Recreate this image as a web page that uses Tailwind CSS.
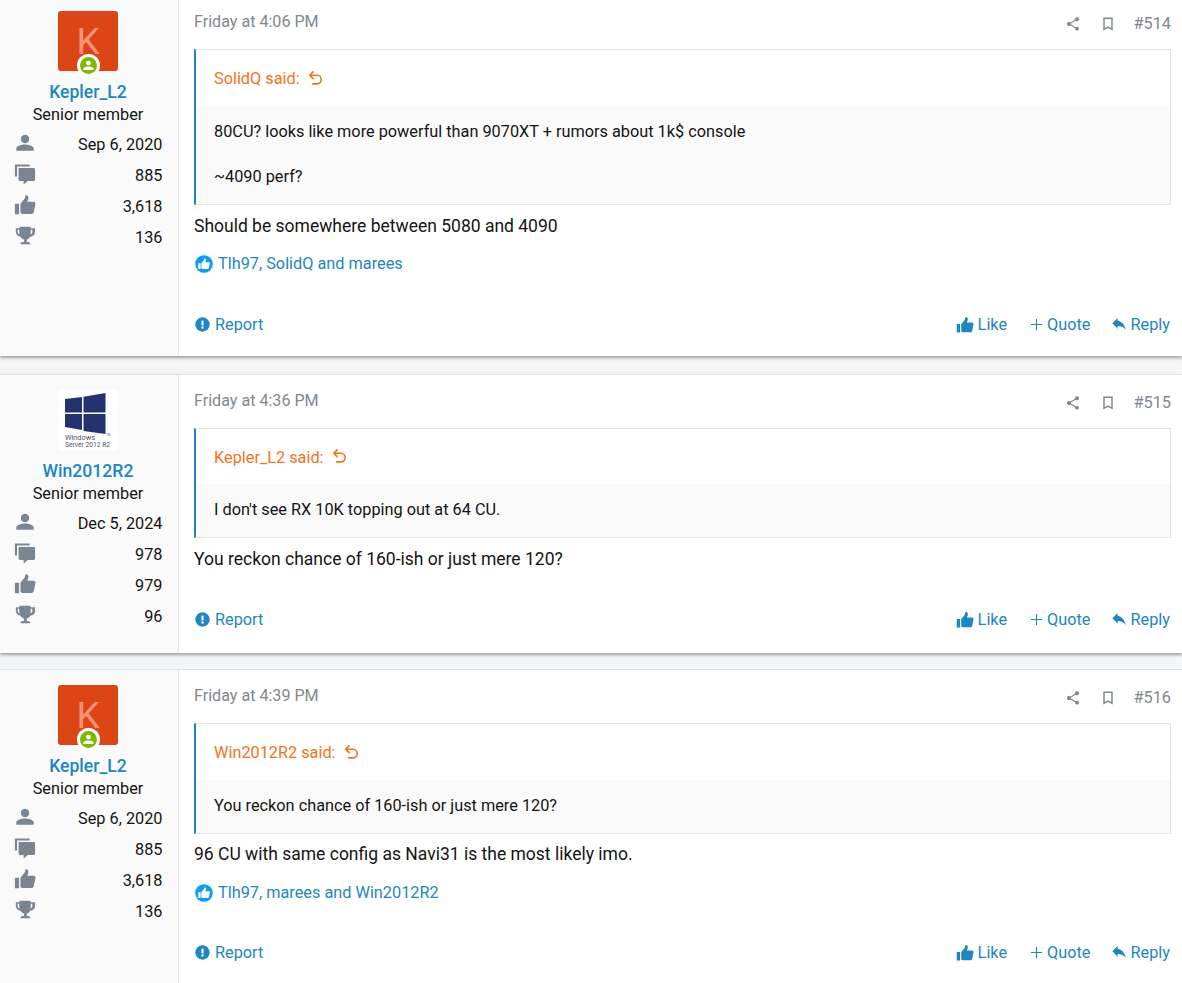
<!DOCTYPE html>
<html><head><meta charset="utf-8">
<script src="https://cdn.jsdelivr.net/npm/@tailwindcss/browser@4"></script>
</head>
<body class="bg-[#f4f5f7] overflow-hidden font-['Roboto',sans-serif] text-[16.3px] leading-[22px] text-[#141414]">
<svg class="hidden">
<defs>
<symbol id="user" viewBox="0 0 24 24"><path fill="currentColor" d="M12 3a4.600 4.600 0 1 1 0 9.200A4.600 4.600 0 0 1 12 3zM2.500 20.500v-2.400c0-3 6.300-4.400 9.500-4.400s9.500 1.400 9.500 4.400v2.400z"/></symbol>
<symbol id="msgs" viewBox="0 0 24 24"><path fill="currentColor" d="M1 1.500h16v2.300H3.300v11H1zM5 5.500H21.500a1.500 1.500 0 0 1 1.500 1.500V18a1.500 1.500 0 0 1-1.500 1.500H15L10.500 23.500V19.500H6.500A1.500 1.500 0 0 1 5 18z"/></symbol>
<symbol id="thumb" viewBox="0 0 24 24"><path fill="currentColor" d="M1 10.500h4.500V22H1zM7 10.500l4.500-5.200c.6-1.200.5-2.600 1-3.800 1.700-.5 3.300.6 3.300 2.700 0 1.700-.8 3-1.300 4.300h7c1.300 0 2.200 1.200 1.900 2.400l-1.900 9c-.3 1.100-1.100 1.800-2.300 1.800H9.500C8 21.700 7 20.800 7 19.500z"/></symbol>
<symbol id="trophy" viewBox="0 0 24 24"><path fill="currentColor" d="M6 2h12v1.500h5v4.200c0 2.800-2.200 4.800-5.300 5.100-.8 1.600-2.100 2.700-3.700 3.100v2.600h1.500c1.300 0 2.200.9 2.500 2.500H6.900c.3-1.600 1.200-2.500 2.500-2.500H11v-2.600c-1.700-.4-3-1.500-3.700-3.100C4.200 12.500 2 10.500 2 7.700V3.500h4zM4 5.300v2.400c0 1.200.7 2.100 2 2.600-.2-1-.3-2.100-.3-3.200V5.300zm16 0h-1.700v1.800c0 1.100-.1 2.200-.3 3.200 1.300-.5 2-1.400 2-2.600z"/></symbol>
<symbol id="share" viewBox="0 0 24 24"><path fill="currentColor" d="M18 16.100c-.8 0-1.500.3-2 .8l-7.100-4.200c.1-.2.100-.5.100-.7s0-.5-.1-.7l7-4.100c.5.500 1.300.800 2.100.800a3 3 0 1 0-3-3c0 .2 0 .5.100.7l-7 4.100A3 3 0 0 0 3 12a3 3 0 0 0 5.100 2.200l7.100 4.200c-.1.200-.1.400-.1.600a2.900 2.900 0 1 0 2.900-2.900z"/></symbol>
<symbol id="book" viewBox="0 0 24 24"><path fill="none" stroke="currentColor" stroke-width="2.200" d="M6 3.500h12V20l-6-3.200L6 20z"/></symbol>
<symbol id="undo" viewBox="0 0 24 24"><path fill="none" stroke="currentColor" stroke-width="2.200" stroke-linecap="round" stroke-linejoin="round" d="M9.500 2.500L5 7l4.500 4.500M5 7h9.500a5.700 5.700 0 0 1 0 11.500H9"/></symbol>
<symbol id="report" viewBox="0 0 24 24"><circle cx="12" cy="12" r="11.500" fill="currentColor"/><rect x="10.300" y="5.500" width="3.400" height="8" rx="1" fill="#fff"/><circle cx="12" cy="16.800" r="1.900" fill="#fff"/></symbol>
<symbol id="plus" viewBox="0 0 24 24"><path fill="none" stroke="currentColor" stroke-width="1.800" d="M12 3v18M3 12h18"/></symbol>
<symbol id="reply" viewBox="0 0 24 24"><path fill="currentColor" d="M10 5.500V1.500L2 9.500l8 8v-4.100c5.700 0 9.600 1.800 12 6.100-1-6-4.400-12.800-12-14z"/></symbol>
</defs>
</svg>

<main class="-mt-[4px] flex flex-col">

<!-- Post 514 -->
<article class="flex h-[360px] bg-white shadow-[0_2px_3px_rgba(0,0,0,0.35)]">
  <aside class="w-[179px] shrink-0 bg-[#fafafa] border-r border-[#e3e5e8] pt-[15px] pr-[2px] flex flex-col items-center">
    <div class="relative w-[60px] h-[60px] rounded-[3px] bg-[#dc4516] flex items-center justify-center text-[#f8917a] text-[37px] font-normal leading-none">K
      <span class="absolute left-[18.500px] top-[43px] w-[23px] h-[23px] rounded-full bg-white flex items-center justify-center"><span class="w-[17px] h-[17px] rounded-full bg-[#7fb800] text-white flex items-center justify-center"><svg class="w-[13px] h-[13px]"><use href="#user"/></svg></span></span>
    </div>
    <div class="mt-[6px] text-[#1e86c1] text-[17.600px] font-medium leading-[30px] h-[24px]">Kepler_L2</div>
    <div class="leading-[22px] mt-[3px]">Senior member</div>
    <dl class="w-full pl-[14px] pr-[13.500px] mt-[3px]">
      <div class="flex justify-between items-center h-[31.200px]"><svg class="w-[22px] h-[22px] -mt-[4px] text-[#7a8594]"><use href="#user"/></svg><span>Sep 6, 2020</span></div>
      <div class="flex justify-between items-center h-[31.200px]"><svg class="w-[22px] h-[22px] -mt-[4px] text-[#7a8594]"><use href="#msgs"/></svg><span>885</span></div>
      <div class="flex justify-between items-center h-[31.200px]"><svg class="w-[22px] h-[22px] -mt-[4px] text-[#7a8594]"><use href="#thumb"/></svg><span>3,618</span></div>
      <div class="flex justify-between items-center h-[31.200px]"><svg class="w-[22px] h-[22px] -mt-[4px] text-[#7a8594]"><use href="#trophy"/></svg><span>136</span></div>
    </dl>
  </aside>
  <section class="flex-1 min-w-0 pl-[15px] pr-[11px] flex flex-col">
    <header class="h-[53px] pt-[15px] flex items-start text-[#7f8791]">
      <span class="text-[16.100px]">Friday at 4:06 PM</span>
      <span class="ml-auto flex items-center gap-[19px] mt-[2px]"><svg class="w-[16px] h-[16px]"><use href="#share"/></svg><svg class="w-[16px] h-[16px]"><use href="#book"/></svg><span class="ml-[-1px]">#514</span></span>
    </header>
    <blockquote class="border border-[#e1e3e6] border-l-[2px] border-l-[#1e86c1]">
      <div class="h-[56px] pt-[2px] pl-[18px] flex items-center text-[#f4731c]">SolidQ said:<svg class="w-[18px] h-[18px] ml-[6px] -mt-[1px]"><use href="#undo"/></svg></div>
      <div class="bg-[#fafafa] pl-[18px] pt-[15px] pb-[15px] leading-[22.500px]">80CU? looks like more powerful than 9070XT + rumors about 1k$ console<br><br>~4090 perf?</div>
    </blockquote>
    <div class="mt-[10px] text-[17.500px]">Should be somewhere between 5080 and 4090</div>
    <div class="mt-[16px] flex items-center text-[#1e86c1]"><svg class="w-[20px] h-[20px] mr-[4px]" viewBox="0 0 24 24"><circle cx="12" cy="12" r="12" fill="#e9f5fd"/><circle cx="12" cy="12" r="10.500" fill="#0f9df0"/><g transform="translate(4.500 4.500) scale(.62)"><use href="#thumb" width="24" height="24" class="text-white"/></g></svg>Tlh97, SolidQ and marees</div>
    <footer class="mt-[39px] flex items-center text-[#1e86c1] pr-[1px]">
      <span class="flex items-center ml-[1px]"><svg class="w-[15px] h-[15px] mr-[5px]"><use href="#report"/></svg>Report</span>
      <span class="ml-auto flex items-center"><svg class="w-[18px] h-[18px] mr-[4px]"><use href="#thumb"/></svg>Like</span>
      <span class="ml-[22px] flex items-center"><svg class="w-[15px] h-[15px] mr-[3px]"><use href="#plus"/></svg>Quote</span>
      <span class="ml-[20px] flex items-center"><svg class="w-[16px] h-[16px] mr-[4px]"><use href="#reply"/></svg>Reply</span>
    </footer>
  </section>
</article>

<!-- Post 515 -->
<article class="mt-[18px] flex h-[279px] bg-white border-t border-[#dfe1e4] shadow-[0_2px_3px_rgba(0,0,0,0.35)]">
  <aside class="w-[179px] shrink-0 bg-[#fafafa] border-r border-[#e3e5e8] pt-[15px] pr-[2px] flex flex-col items-center">
    <svg class="w-[60px] h-[60px] shrink-0 rounded-[3px] bg-white" viewBox="0 0 60 60">
      <path fill="#24336f" d="M7 9L24 7V22.500H7ZM25.500 6.800L47.500 3V22.500H25.500ZM7 24H24V40L7 37ZM25.500 24H47.500V44L25.500 41Z"/>
      <text x="7" y="50" font-family="Roboto" font-size="8" fill="#4d5364" textLength="30" lengthAdjust="spacingAndGlyphs">Windows</text>
      <text x="7" y="57" font-family="Roboto" font-size="7.500" fill="#4d5364" textLength="45" lengthAdjust="spacingAndGlyphs">Server 2012 R2</text>
      <text x="48" y="46" font-family="Roboto" font-size="3" fill="#4d5364">TM</text>
    </svg>
    <div class="mt-[6px] text-[#1e86c1] text-[17.600px] font-medium leading-[30px] h-[24px]">Win2012R2</div>
    <div class="leading-[22px] mt-[3px]">Senior member</div>
    <dl class="w-full pl-[14px] pr-[13.500px] mt-[3px]">
      <div class="flex justify-between items-center h-[31.200px]"><svg class="w-[22px] h-[22px] -mt-[4px] text-[#7a8594]"><use href="#user"/></svg><span>Dec 5, 2024</span></div>
      <div class="flex justify-between items-center h-[31.200px]"><svg class="w-[22px] h-[22px] -mt-[4px] text-[#7a8594]"><use href="#msgs"/></svg><span>978</span></div>
      <div class="flex justify-between items-center h-[31.200px]"><svg class="w-[22px] h-[22px] -mt-[4px] text-[#7a8594]"><use href="#thumb"/></svg><span>979</span></div>
      <div class="flex justify-between items-center h-[31.200px]"><svg class="w-[22px] h-[22px] -mt-[4px] text-[#7a8594]"><use href="#trophy"/></svg><span>96</span></div>
    </dl>
  </aside>
  <section class="flex-1 min-w-0 pl-[15px] pr-[11px] flex flex-col">
    <header class="h-[53px] pt-[15px] flex items-start text-[#7f8791]">
      <span class="text-[16.100px]">Friday at 4:36 PM</span>
      <span class="ml-auto flex items-center gap-[19px] mt-[2px]"><svg class="w-[16px] h-[16px]"><use href="#share"/></svg><svg class="w-[16px] h-[16px]"><use href="#book"/></svg><span class="ml-[-1px]">#515</span></span>
    </header>
    <blockquote class="border border-[#e1e3e6] border-l-[2px] border-l-[#1e86c1]">
      <div class="h-[55px] pt-[2px] pl-[18px] flex items-center text-[#f4731c]">Kepler_L2 said:<svg class="w-[18px] h-[18px] ml-[6px] -mt-[1px]"><use href="#undo"/></svg></div>
      <div class="bg-[#fafafa] pl-[18px] pt-[15px] pb-[15px] leading-[22.500px]">I don't see RX 10K topping out at 64 CU.</div>
    </blockquote>
    <div class="mt-[10px] text-[17.500px]">You reckon chance of 160-ish or just mere 120?</div>
    <footer class="mt-[39px] flex items-center text-[#1e86c1] pr-[1px]">
      <span class="flex items-center ml-[1px]"><svg class="w-[15px] h-[15px] mr-[5px]"><use href="#report"/></svg>Report</span>
      <span class="ml-auto flex items-center"><svg class="w-[18px] h-[18px] mr-[4px]"><use href="#thumb"/></svg>Like</span>
      <span class="ml-[22px] flex items-center"><svg class="w-[15px] h-[15px] mr-[3px]"><use href="#plus"/></svg>Quote</span>
      <span class="ml-[20px] flex items-center"><svg class="w-[16px] h-[16px] mr-[4px]"><use href="#reply"/></svg>Reply</span>
    </footer>
  </section>
</article>

<!-- Post 516 -->
<article class="mt-[16px] flex h-[330px] bg-white border-t border-[#dfe1e4]">
  <aside class="w-[179px] shrink-0 bg-[#fafafa] border-r border-[#e3e5e8] pt-[15px] pr-[2px] flex flex-col items-center">
    <div class="relative w-[60px] h-[60px] rounded-[3px] bg-[#dc4516] flex items-center justify-center text-[#f8917a] text-[37px] font-normal leading-none">K
      <span class="absolute left-[18.500px] top-[43px] w-[23px] h-[23px] rounded-full bg-white flex items-center justify-center"><span class="w-[17px] h-[17px] rounded-full bg-[#7fb800] text-white flex items-center justify-center"><svg class="w-[13px] h-[13px]"><use href="#user"/></svg></span></span>
    </div>
    <div class="mt-[6px] text-[#1e86c1] text-[17.600px] font-medium leading-[30px] h-[24px]">Kepler_L2</div>
    <div class="leading-[22px] mt-[3px]">Senior member</div>
    <dl class="w-full pl-[14px] pr-[13.500px] mt-[3px]">
      <div class="flex justify-between items-center h-[31.200px]"><svg class="w-[22px] h-[22px] -mt-[4px] text-[#7a8594]"><use href="#user"/></svg><span>Sep 6, 2020</span></div>
      <div class="flex justify-between items-center h-[31.200px]"><svg class="w-[22px] h-[22px] -mt-[4px] text-[#7a8594]"><use href="#msgs"/></svg><span>885</span></div>
      <div class="flex justify-between items-center h-[31.200px]"><svg class="w-[22px] h-[22px] -mt-[4px] text-[#7a8594]"><use href="#thumb"/></svg><span>3,618</span></div>
      <div class="flex justify-between items-center h-[31.200px]"><svg class="w-[22px] h-[22px] -mt-[4px] text-[#7a8594]"><use href="#trophy"/></svg><span>136</span></div>
    </dl>
  </aside>
  <section class="flex-1 min-w-0 pl-[15px] pr-[11px] flex flex-col">
    <header class="h-[53px] pt-[15px] flex items-start text-[#7f8791]">
      <span class="text-[16.100px]">Friday at 4:39 PM</span>
      <span class="ml-auto flex items-center gap-[19px] mt-[2px]"><svg class="w-[16px] h-[16px]"><use href="#share"/></svg><svg class="w-[16px] h-[16px]"><use href="#book"/></svg><span class="ml-[-1px]">#516</span></span>
    </header>
    <blockquote class="border border-[#e1e3e6] border-l-[2px] border-l-[#1e86c1]">
      <div class="h-[56px] pt-[2px] pl-[18px] flex items-center text-[#f4731c]">Win2012R2 said:<svg class="w-[18px] h-[18px] ml-[6px] -mt-[1px]"><use href="#undo"/></svg></div>
      <div class="bg-[#fafafa] pl-[18px] pt-[15px] pb-[15px] leading-[22.500px]">You reckon chance of 160-ish or just mere 120?</div>
    </blockquote>
    <div class="mt-[9px] text-[17.500px]">96 CU with same config as Navi31 is the most likely imo.</div>
    <div class="mt-[17px] flex items-center text-[#1e86c1]"><svg class="w-[20px] h-[20px] mr-[4px]" viewBox="0 0 24 24"><circle cx="12" cy="12" r="12" fill="#e9f5fd"/><circle cx="12" cy="12" r="10.500" fill="#0f9df0"/><g transform="translate(4.500 4.500) scale(.62)"><use href="#thumb" width="24" height="24" class="text-white"/></g></svg>Tlh97, marees and Win2012R2</div>
    <footer class="mt-[38px] flex items-center text-[#1e86c1] pr-[1px]">
      <span class="flex items-center ml-[1px]"><svg class="w-[15px] h-[15px] mr-[5px]"><use href="#report"/></svg>Report</span>
      <span class="ml-auto flex items-center"><svg class="w-[18px] h-[18px] mr-[4px]"><use href="#thumb"/></svg>Like</span>
      <span class="ml-[22px] flex items-center"><svg class="w-[15px] h-[15px] mr-[3px]"><use href="#plus"/></svg>Quote</span>
      <span class="ml-[20px] flex items-center"><svg class="w-[16px] h-[16px] mr-[4px]"><use href="#reply"/></svg>Reply</span>
    </footer>
  </section>
</article>

</main>
</body></html>
